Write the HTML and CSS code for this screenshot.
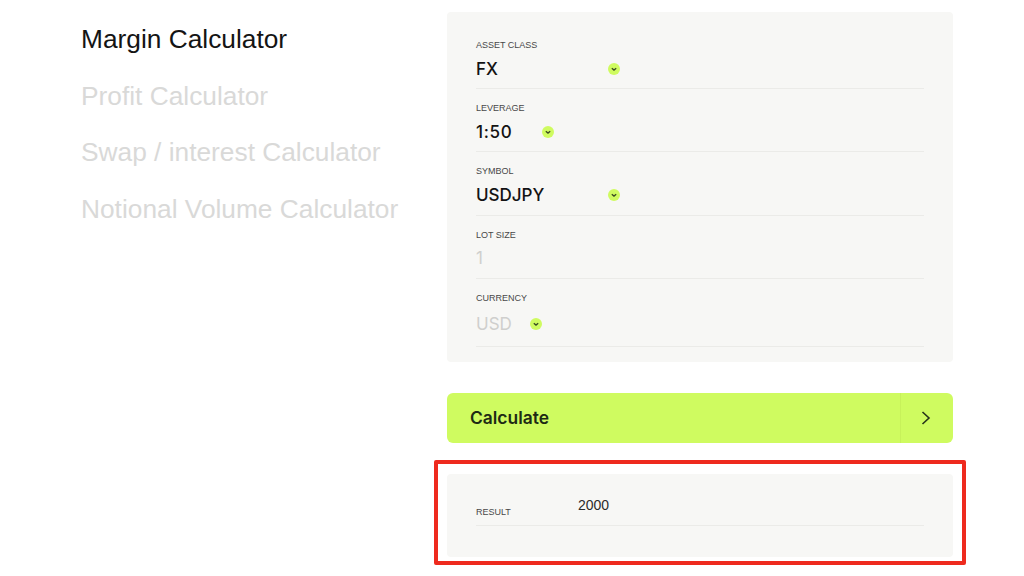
FILE: index.html
```html
<!DOCTYPE html>
<html lang="en">
<head>
<meta charset="utf-8">
<title>Margin Calculator</title>
<link rel="stylesheet" href="styles.css">
</head>
<body>
<div class="page">
  <nav class="side">
    <a class="side-item active">Margin Calculator</a>
    <a class="side-item">Profit Calculator</a>
    <a class="side-item">Swap / interest Calculator</a>
    <a class="side-item">Notional Volume Calculator</a>
  </nav>
  <main class="main">
    <section class="panel form">
      <div class="field">
        <div class="label">ASSET CLASS</div>
        <div class="value"><span class="w-fx">FX</span><svg class="chev" viewBox="0 0 12 12"><circle cx="6" cy="6" r="6" fill="#cffb60"/><path d="M3.8 5.2l2.2 1.9 2.2-1.9" fill="none" stroke="#3a4a22" stroke-width="1.3"/></svg></div>
      </div>
      <div class="field">
        <div class="label">LEVERAGE</div>
        <div class="value"><span class="w-lev">1:50</span><svg class="chev" viewBox="0 0 12 12"><circle cx="6" cy="6" r="6" fill="#cffb60"/><path d="M3.8 5.2l2.2 1.9 2.2-1.9" fill="none" stroke="#3a4a22" stroke-width="1.3"/></svg></div>
      </div>
      <div class="field">
        <div class="label">SYMBOL</div>
        <div class="value"><span class="w-fx">USDJPY</span><svg class="chev" viewBox="0 0 12 12"><circle cx="6" cy="6" r="6" fill="#cffb60"/><path d="M3.8 5.2l2.2 1.9 2.2-1.9" fill="none" stroke="#3a4a22" stroke-width="1.3"/></svg></div>
      </div>
      <div class="field">
        <div class="label">LOT SIZE</div>
        <div class="value muted">1</div>
      </div>
      <div class="field tall">
        <div class="label">CURRENCY</div>
        <div class="value muted"><span class="w-cur">USD</span><svg class="chev" viewBox="0 0 12 12"><circle cx="6" cy="6" r="6" fill="#cffb60"/><path d="M3.8 5.2l2.2 1.9 2.2-1.9" fill="none" stroke="#3a4a22" stroke-width="1.3"/></svg></div>
      </div>
    </section>
    <button class="calc" type="button">
      <span class="calc-text">Calculate</span>
      <span class="calc-arrow"><svg width="12" height="16" viewBox="0 0 12 16"><path d="M2.5 2l6.5 6-6.5 6" fill="none" stroke="#26331a" stroke-width="1.6"/></svg></span>
    </button>
    <div class="frame">
      <section class="panel result">
        <div class="result-row">
          <span class="result-label">RESULT</span>
          <span class="result-value">2000</span>
        </div>
      </section>
    </div>
  </main>
</div>
</body>
</html>
```
FILE: styles.css
```css
* { box-sizing: border-box; }
html, body { margin: 0; padding: 0; background: #fff; }
body { width: 1024px; height: 576px; overflow: hidden; font-family: "Liberation Sans", Arial, sans-serif; }
.page { display: flex; height: 576px; }
.side { width: 447px; padding: 10px 0 0 81px; display: flex; flex-direction: column; flex: none; }
.side-item { font-size: 26.3px; line-height: 30px; height: 56.6px; color: #d9d9d8; padding-top: 14px; }
.side-item.active { color: #141414; }
.main { width: 506px; padding-top: 12px; flex: none; }
.panel { background: #f7f7f5; border-radius: 4px; padding: 0 29px; }
.panel.form { height: 350px; padding-top: 14px; }
.field { height: 63.2px; border-bottom: 1px solid #ebebe8; padding-top: 14px; }
.field.tall { height: 68px; }
.label { font-size: 9px; line-height: 10px; color: #484848; }
.value { display: flex; align-items: center; height: 27px; margin-top: 5px; font-family: Inter, "Liberation Sans", sans-serif; font-size: 17px; font-weight: 500; color: #131313; }
.field.tall .value { margin-top: 8px; }
.value.muted { color: #cfcfcd; font-weight: 400; }
.chev { width: 12px; height: 12px; flex: none; }
.w-fx { width: 132px; }
.w-lev { width: 66px; letter-spacing: 0.7px; }
.w-cur { width: 54px; }
.calc { display: flex; align-items: stretch; width: 100%; height: 50px; margin: 30.5px 0 0; padding: 0; border: 0; border-radius: 6px; background: #cffb60; color: #1d2a14; font-family: Inter, "Liberation Sans", sans-serif; }
.calc-text { flex: 1; text-align: left; align-self: center; padding-left: 23px; font-size: 17.4px; font-weight: 600; }
.calc-arrow { width: 53px; display: flex; align-items: center; justify-content: center; padding-right: 3px; border-left: 1px solid #c7f15a; }
.frame { margin: 17.5px -13px 0; height: 105px; padding: 10px 9px; border: 4px solid #ee2a1e; border-radius: 2px; }
.panel.result { height: 83px; padding-top: 19px; }
.result-row { display: flex; align-items: flex-end; height: 33px; border-bottom: 1px solid #ebebe8; }
.result-label { width: 102px; font-size: 9px; line-height: 10px; color: #484848; padding-bottom: 8px; height: 18px; }
.result-value { font-size: 14px; line-height: 16px; color: #2b2b2b; padding-bottom: 12px; height: 28px; }
```
